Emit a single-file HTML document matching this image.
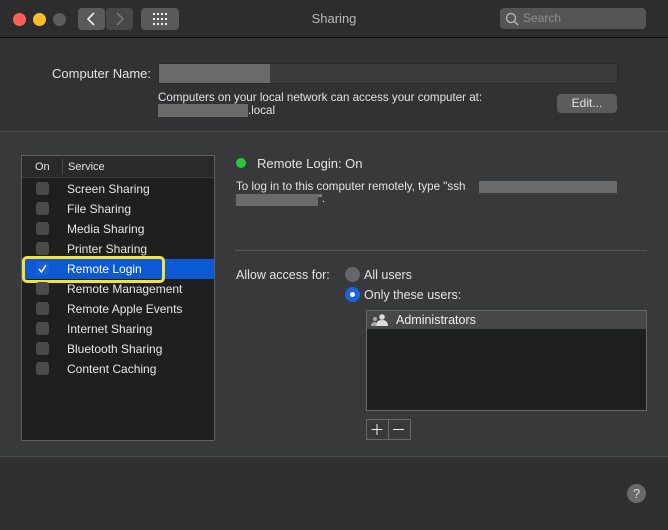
<!DOCTYPE html>
<html><head><meta charset="utf-8"><style>
*{margin:0;padding:0;box-sizing:border-box}
body{width:668px;height:530px;background:#323234;font-family:"Liberation Sans",sans-serif;color:#e3e3e3;position:relative;overflow:hidden;font-size:12px}
.a{position:absolute}
.dot{position:absolute;width:13px;height:13px;border-radius:50%;top:13px}
.btn{position:absolute;background:#5a5a5c;border-radius:4px}
.row{position:absolute;left:67px;font-size:12px;color:#e6e6e6}
.cb{position:absolute;left:36px;width:13px;height:13px;border-radius:3px;background:#4a4a4c}
.gray{position:absolute;background:#6a6a6a}
</style></head><body>
<div class="a" style="left:0;top:0;width:668px;height:38px;background:#2d2d2f;border-bottom:1px solid #111"></div>
<div class="dot" style="left:13px;background:#fd5f57"></div>
<div class="dot" style="left:33px;background:#febc2e"></div>
<div class="dot" style="left:53px;background:#5d5d5f"></div>
<div class="btn" style="left:78px;top:8px;width:27px;height:22px"></div>
<div class="btn" style="left:106px;top:8px;width:27px;height:22px;background:#48484a"></div>
<svg class="a" style="left:78px;top:8px" width="55" height="22"><path d="M16 5 L10 11 L16 17" stroke="#eee" stroke-width="1.6" fill="none"/><path d="M39 5 L45 11 L39 17" stroke="#777" stroke-width="1.6" fill="none"/></svg>
<div class="btn" style="left:141px;top:8px;width:38px;height:22px"></div>
<svg class="a" style="left:153px;top:13px" width="14" height="12"><g fill="#eee"><rect x="0" y="0" width="2" height="2"/><rect x="4" y="0" width="2" height="2"/><rect x="8" y="0" width="2" height="2"/><rect x="12" y="0" width="2" height="2"/><rect x="0" y="5" width="2" height="2"/><rect x="4" y="5" width="2" height="2"/><rect x="8" y="5" width="2" height="2"/><rect x="12" y="5" width="2" height="2"/><rect x="0" y="10" width="2" height="2"/><rect x="4" y="10" width="2" height="2"/><rect x="8" y="10" width="2" height="2"/><rect x="12" y="10" width="2" height="2"/></g></svg>
<div class="a" style="left:0;width:668px;top:11px;text-align:center;font-size:13px;color:#b8b8b8">Sharing</div>
<div class="btn" style="left:500px;top:8px;width:146px;height:21px;background:#555557"></div>
<svg class="a" style="left:505px;top:12px" width="14" height="14"><circle cx="6" cy="6" r="4.5" stroke="#bbb" stroke-width="1.3" fill="none"/><path d="M9.5 9.5 L13 13" stroke="#bbb" stroke-width="1.4"/></svg>
<div class="a" style="left:523px;top:11px;font-size:12px;color:#8e8e8e">Search</div>

<div class="a" style="left:0;width:151px;text-align:right;top:66px;font-size:13px;white-space:nowrap">Computer Name:</div>
<div class="a" style="left:158px;top:63px;width:460px;height:21px;background:#3b3b3d;border:1px solid #2a2a2c"></div>
<div class="gray" style="left:159px;top:64px;width:111px;height:19px"></div>
<div class="a" style="left:158px;top:91px;font-size:11.6px">Computers on your local network can access your computer at:</div>
<div class="gray" style="left:158px;top:104px;width:90px;height:13px"></div>
<div class="a" style="left:248px;top:104px;font-size:11.6px">.local</div>
<div class="btn" style="left:557px;top:94px;width:60px;height:19px;background:#5c5c5e;font-size:12px;text-align:center;line-height:19px">Edit...</div>

<div class="a" style="left:0;top:131px;width:668px;height:326px;background:#38393b;border-top:1px solid #4a4a4c;border-bottom:1px solid #4d4d4f"></div>
<div class="a" style="left:21px;top:155px;width:194px;height:286px;background:#1e1f21;border:1px solid #606062"></div>
<div class="a" style="left:22px;top:156px;width:192px;height:22px;background:#2a2a2c;border-bottom:1px solid #3a3a3c"></div>
<div class="a" style="left:35px;top:161px;font-size:11px">On</div>
<div class="a" style="left:62px;top:159px;width:1px;height:16px;background:#4a4a4c"></div>
<div class="a" style="left:68px;top:161px;font-size:11px">Service</div>
<div class="a" style="left:22px;top:259px;width:192px;height:20px;background:#0b5ad4"></div>
<div class="cb" style="top:182px"></div><div class="row" style="top:182px">Screen Sharing</div>
<div class="cb" style="top:202px"></div><div class="row" style="top:202px">File Sharing</div>
<div class="cb" style="top:222px"></div><div class="row" style="top:222px">Media Sharing</div>
<div class="cb" style="top:242px"></div><div class="row" style="top:242px">Printer Sharing</div>
<div class="cb" style="top:262px;background:#1e5fcf"></div>
<svg class="a" style="left:36px;top:262px" width="13" height="13"><path d="M3 7 L5.5 10 L10 3" stroke="#fff" stroke-width="1.4" fill="none"/></svg>
<div class="row" style="top:262px;color:#fff">Remote Login</div>
<div class="a" style="left:22px;top:256px;width:143px;height:27px;border:3px solid #f3e23a;border-radius:5px"></div>
<div class="cb" style="top:282px"></div><div class="row" style="top:282px">Remote Management</div>
<div class="cb" style="top:302px"></div><div class="row" style="top:302px">Remote Apple Events</div>
<div class="cb" style="top:322px"></div><div class="row" style="top:322px">Internet Sharing</div>
<div class="cb" style="top:342px"></div><div class="row" style="top:342px">Bluetooth Sharing</div>
<div class="cb" style="top:362px"></div><div class="row" style="top:362px">Content Caching</div>

<div class="a" style="left:236px;top:158px;width:10px;height:10px;border-radius:50%;background:#2fc43f"></div>
<div class="a" style="left:257px;top:156px;font-size:13px">Remote Login: On</div>
<div class="a" style="left:236px;top:180px;font-size:11.6px;white-space:nowrap">To log in to this computer remotely, type "ssh</div>
<div class="gray" style="left:479px;top:181px;width:138px;height:12px"></div>
<div class="gray" style="left:236px;top:194px;width:82px;height:12px"></div>
<div class="a" style="left:318px;top:193px;font-size:11px">".</div>
<div class="a" style="left:235px;top:250px;width:412px;height:1px;background:#555557"></div>
<div class="a" style="left:236px;top:268px;font-size:12.5px">Allow access for:</div>
<div class="a" style="left:345px;top:267px;width:15px;height:15px;border-radius:50%;background:#666668"></div>
<div class="a" style="left:364px;top:268px;font-size:12.5px">All users</div>
<div class="a" style="left:345px;top:287px;width:15px;height:15px;border-radius:50%;background:#1d63dc"></div>
<div class="a" style="left:350px;top:292px;width:5px;height:5px;border-radius:50%;background:#fff"></div>
<div class="a" style="left:364px;top:288px;font-size:12.5px">Only these users:</div>
<div class="a" style="left:366px;top:310px;width:281px;height:101px;background:#1e1f21;border:1px solid #68686a"></div>
<div class="a" style="left:367px;top:311px;width:279px;height:18px;background:#47474a"></div>
<svg class="a" style="left:371px;top:313px" width="18" height="14"><circle cx="11" cy="4" r="2.8" fill="#ddd"/><path d="M5 13 Q5 7 11 7 Q17 7 17 13Z" fill="#ddd"/><circle cx="4" cy="6" r="2" fill="#aaa"/><path d="M0 13 Q0 9 4 9 Q6 9 6 11 L5 13Z" fill="#aaa"/></svg>
<div class="a" style="left:396px;top:313px;font-size:12.5px;color:#eee">Administrators</div>
<div class="a" style="left:366px;top:419px;width:45px;height:21px;border:1px solid #6a6a6c"></div>
<div class="a" style="left:388px;top:419px;width:1px;height:21px;background:#6a6a6c"></div>
<svg class="a" style="left:366px;top:419px" width="45" height="21"><path d="M11 5V16M5.5 10.5H16.5" stroke="#eee" stroke-width="1"/><path d="M27 10.5H38" stroke="#eee" stroke-width="1"/></svg>

<div class="a" style="left:0;top:458px;width:668px;height:72px;background:#303032"></div>
<div class="a" style="left:627px;top:484px;width:19px;height:19px;border-radius:50%;background:#6a6a6c;color:#ddd;font-size:13px;text-align:center;line-height:19px">?</div>
</body></html>
